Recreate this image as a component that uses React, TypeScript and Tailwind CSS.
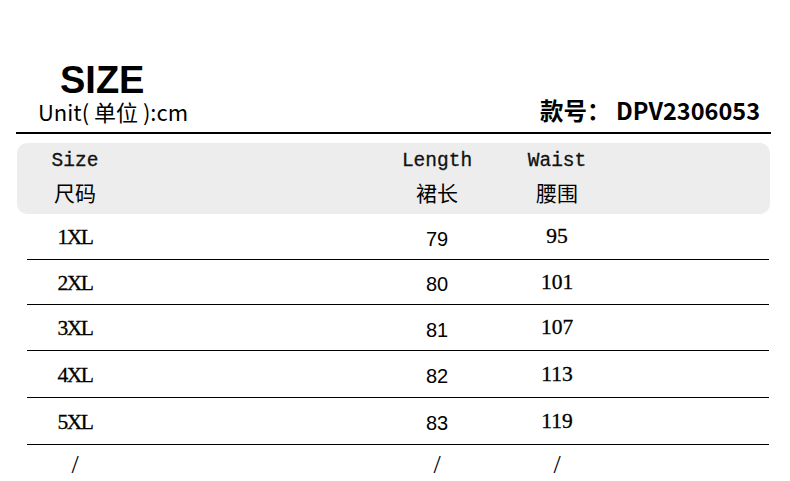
import React from "react";

const rows = [
  ["1XL", "79", "95"],
  ["2XL", "80", "101"],
  ["3XL", "81", "107"],
  ["4XL", "82", "113"],
  ["5XL", "83", "119"],
];

const rowHeights = ["h-[46px]", "h-[45px]", "h-[46px]", "h-[47px]", "h-[47px]"];

const cjk = "font-['Noto_Sans_CJK_SC',sans-serif]";
const mono = "font-['Liberation_Mono','Noto_Sans_CJK_SC',monospace]";
const serif = "font-['Liberation_Serif',serif]";
const sans = "font-['Liberation_Sans',sans-serif]";

export default function App() {
  return (
    <div className="w-[790px] h-[481px] bg-white text-black overflow-hidden">
      <div className={`pt-[63px] pl-[60px] text-[38px] leading-[34px] font-bold ${sans}`}>SIZE</div>
      <div className="h-[35px] flex justify-between items-end pl-[38px] pr-[30px] pb-[10px]">
        <div className={`text-[22px] leading-[22px] ${cjk}`}>Unit( 单位 ):cm</div>
        <div className={`text-[23.5px] leading-[23px] font-bold ${cjk}`}>
          款号： DPV2306053
        </div>
      </div>
      <div className="mx-[16px] w-[755px] h-[2px] bg-black" />
      <div className="mt-[9px] ml-[17px] w-[753px] h-[71px] rounded-[10px] bg-[#ededed] pl-[10px]">
        <div className="grid grid-cols-[96px_254px_120px_120px] h-full">
          <div className="flex flex-col items-center pt-[7px]">
            <span className={`text-[19.5px] leading-[22px] text-[#111] [-webkit-text-stroke:0.3px_#111] ${mono}`}>Size</span>
            <span className={`text-[21px] leading-[28px] mt-[6px] ${cjk}`}>尺码</span>
          </div>
          <div />
          <div className="flex flex-col items-center pt-[7px]">
            <span className={`text-[19.5px] leading-[22px] text-[#111] [-webkit-text-stroke:0.3px_#111] ${mono}`}>Length</span>
            <span className={`text-[21px] leading-[28px] mt-[6px] ${cjk}`}>裙长</span>
          </div>
          <div className="flex flex-col items-center pt-[7px]">
            <span className={`text-[19.5px] leading-[22px] text-[#111] [-webkit-text-stroke:0.3px_#111] ${mono}`}>Waist</span>
            <span className={`text-[21px] leading-[28px] mt-[6px] ${cjk}`}>腰围</span>
          </div>
        </div>
      </div>
      <div className="ml-[27px] w-[742px]">
        {rows.map((r, i) => (
          <div
            key={r[0]}
            className={`grid grid-cols-[96px_254px_120px_120px] border-b border-black ${rowHeights[i]}`}
          >
            <div className={`flex items-center justify-center pt-[2px] text-[21.5px] tracking-[-1.5px] [-webkit-text-stroke:0.3px_#000] ${serif}`}>{r[0]}</div>
            <div />
            <div className={`flex items-center justify-center pt-[4px] text-[20px] ${sans}`}>{r[1]}</div>
            <div className={`flex items-center justify-center pt-[0px] text-[21.5px] [-webkit-text-stroke:0.3px_#000] ${serif}`}>{r[2]}</div>
          </div>
        ))}
        <div className="grid grid-cols-[96px_254px_120px_120px] h-[35px]">
          <div className={`flex items-center justify-center text-[26px] ${serif}`}>/</div>
          <div />
          <div className={`flex items-center justify-center text-[26px] ${serif}`}>/</div>
          <div className={`flex items-center justify-center text-[26px] ${serif}`}>/</div>
        </div>
      </div>
    </div>
  );
}
